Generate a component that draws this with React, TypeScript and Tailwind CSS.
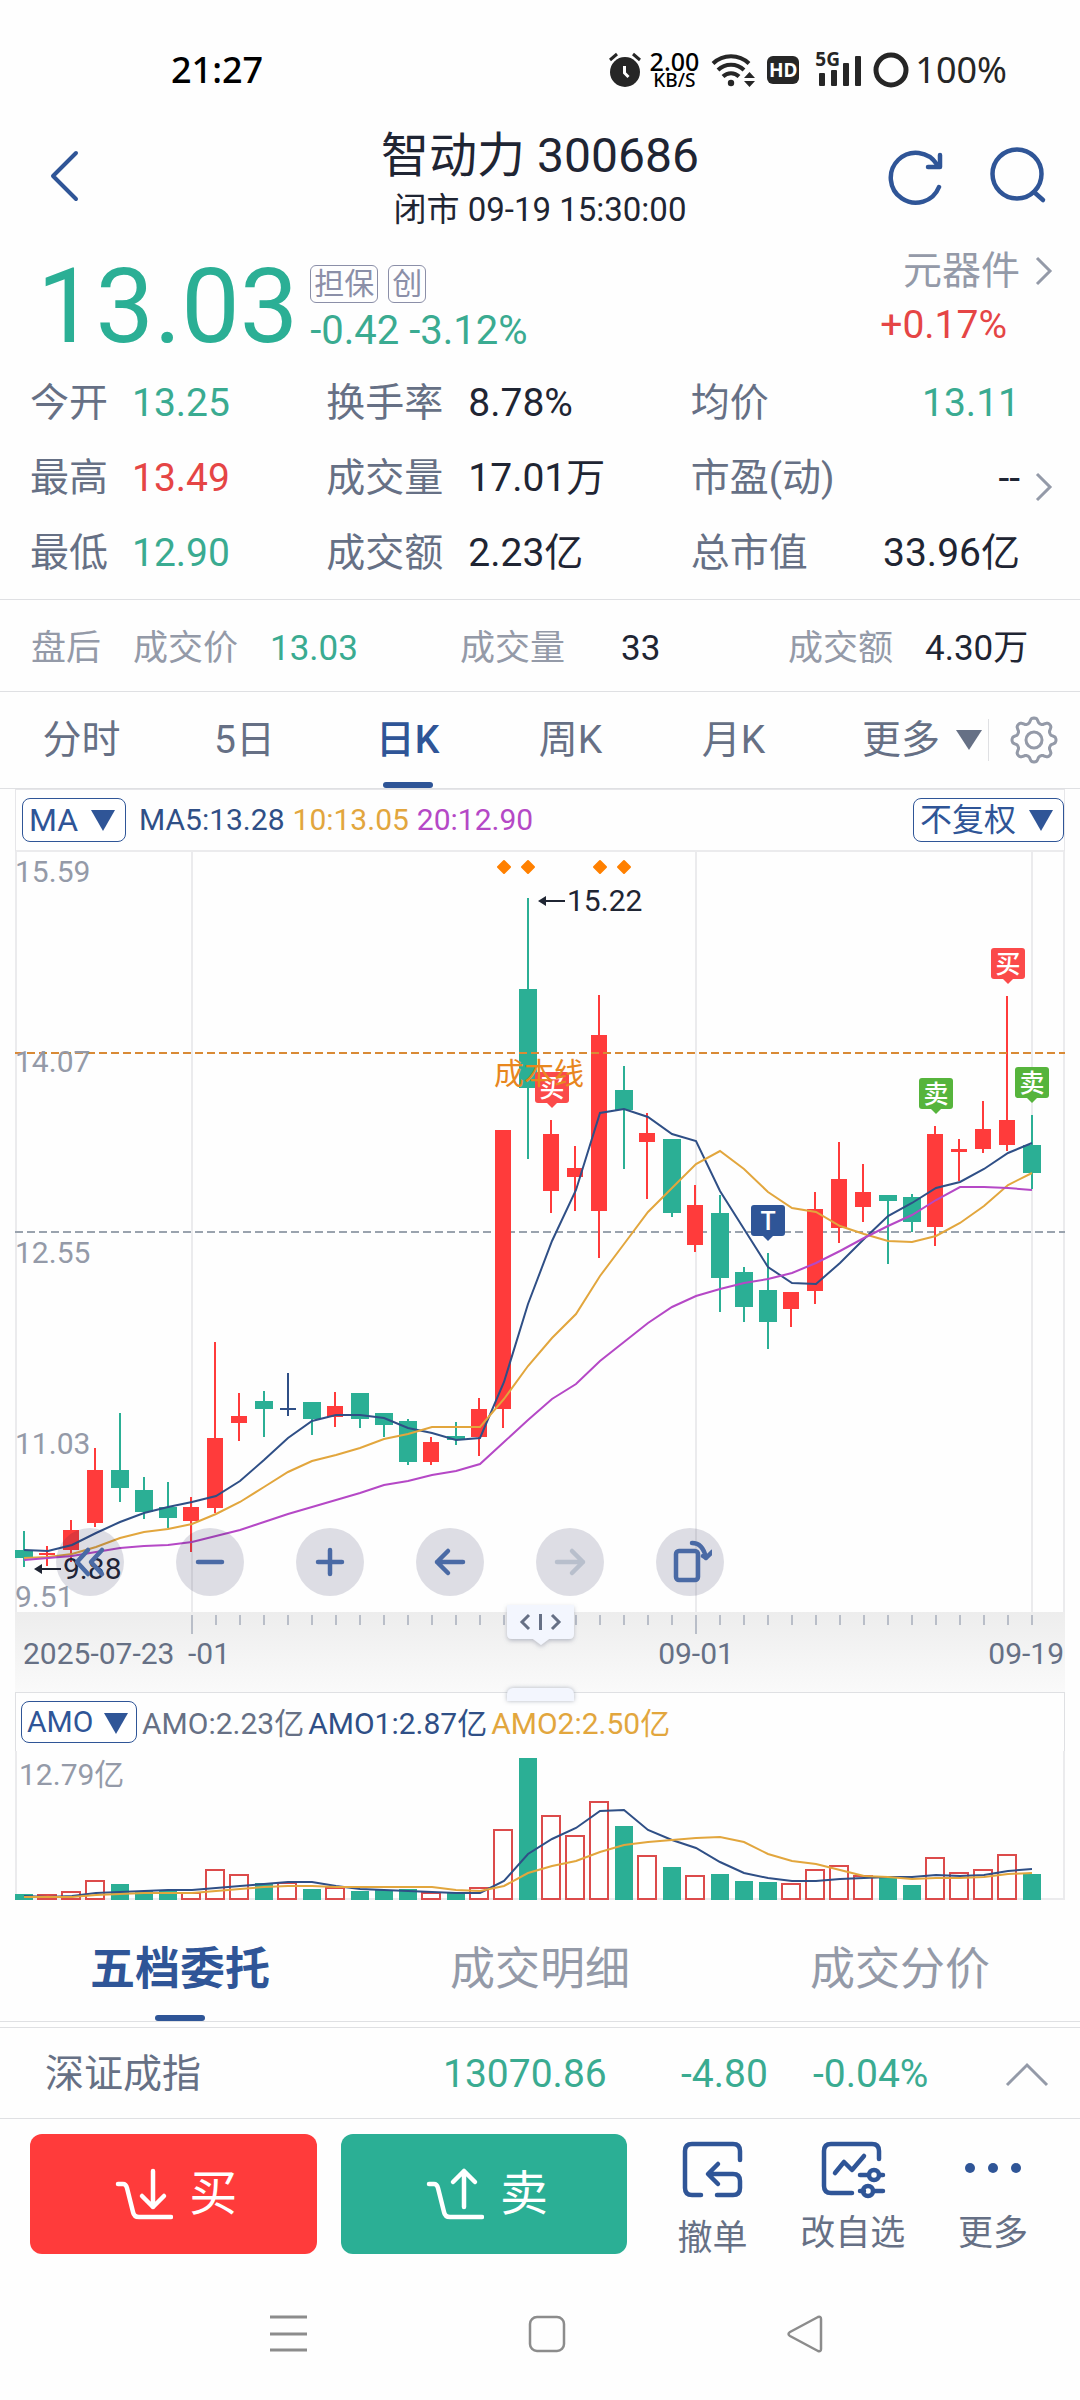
import type { ReactNode } from "react";

type Kind = "up" | "down" | "flat";
// kind, high, body top, body bottom, low
type Candle = [Kind, number, number, number, number];

const RED = "#ff3b3b";
const GREEN = "#2baf95";
const BLUE = "#2f5597";
const NAVY = "#2f4f86";
const GOLD = "#e2a63d";
const PURPLE = "#b548c6";

const candles: Candle[] = [
  ["down", 1531, 1550, 1558, 1567],
  ["up", 1546, 1553, 1555, 1566],
  ["up", 1520, 1530, 1550, 1562],
  ["up", 1448, 1470, 1523, 1527],
  ["down", 1413, 1470, 1488, 1502],
  ["down", 1477, 1490, 1512, 1519],
  ["down", 1482, 1507, 1518, 1528],
  ["up", 1497, 1507, 1521, 1552],
  ["up", 1342, 1438, 1508, 1513],
  ["up", 1393, 1416, 1423, 1441],
  ["down", 1391, 1401, 1409, 1437],
  ["flat", 1373, 1408, 1410, 1416],
  ["down", 1402, 1402, 1419, 1435],
  ["up", 1392, 1406, 1417, 1427],
  ["down", 1393, 1393, 1419, 1428],
  ["down", 1413, 1413, 1425, 1437],
  ["down", 1419, 1421, 1462, 1465],
  ["up", 1437, 1442, 1462, 1465],
  ["down", 1422, 1436, 1440, 1445],
  ["up", 1398, 1409, 1437, 1456],
  ["up", 1130, 1130, 1409, 1428],
  ["down", 898, 989, 1088, 1159],
  ["up", 1120, 1134, 1191, 1213],
  ["up", 1146, 1168, 1177, 1211],
  ["up", 995, 1035, 1211, 1258],
  ["down", 1066, 1090, 1110, 1169],
  ["up", 1113, 1133, 1142, 1199],
  ["down", 1139, 1139, 1213, 1217],
  ["up", 1185, 1205, 1245, 1252],
  ["down", 1195, 1213, 1278, 1312],
  ["down", 1267, 1272, 1307, 1322],
  ["down", 1253, 1290, 1322, 1349],
  ["up", 1292, 1292, 1309, 1327],
  ["up", 1192, 1209, 1291, 1304],
  ["up", 1142, 1179, 1228, 1243],
  ["up", 1164, 1192, 1207, 1222],
  ["down", 1195, 1195, 1201, 1264],
  ["down", 1194, 1197, 1222, 1232],
  ["up", 1126, 1134, 1227, 1246],
  ["up", 1139, 1149, 1152, 1181],
  ["up", 1101, 1129, 1149, 1153],
  ["up", 996, 1120, 1145, 1151],
  ["down", 1115, 1145, 1173, 1189],
];

const ma5 = [
  1550, 1551, 1545, 1533, 1522, 1513, 1507, 1502, 1496, 1481, 1460, 1438, 1421,
  1415, 1415, 1418, 1428, 1433, 1440, 1438, 1382, 1304, 1241, 1190, 1113, 1109,
  1117, 1134, 1141, 1191, 1229, 1267, 1283, 1284, 1263, 1239, 1216, 1203, 1188,
  1182, 1169, 1153, 1143,
];
const ma10 = [
  1558, 1557, 1554, 1547, 1538, 1532, 1529, 1524, 1514, 1502, 1487, 1472, 1461,
  1455, 1448, 1439, 1434, 1427, 1427, 1427, 1399, 1366, 1338, 1314, 1276, 1244,
  1212, 1188, 1164, 1151, 1169, 1192, 1208, 1212, 1226, 1234, 1241, 1242, 1236,
  1223, 1206, 1185, 1173,
];
const ma20 = [
  1560, 1558, 1556, 1552, 1548, 1546, 1545, 1542, 1536, 1530, 1522, 1514, 1507,
  1500, 1493, 1485, 1481, 1475, 1471, 1464, 1442, 1420, 1399, 1384, 1361, 1342,
  1323, 1307, 1296, 1289, 1283, 1279, 1273, 1263, 1251, 1238, 1226, 1215, 1200,
  1187, 1187, 1188, 1190,
];

const amounts = [
  6, 5, 8, 19, 16, 9, 9, 7, 30, 25, 17, 17, 11, 12, 9, 10, 11, 7, 7, 12, 70,
  142, 84, 64, 98, 74, 44, 33, 24, 26, 19, 18, 16, 30, 34, 24, 23, 15, 42, 27,
  30, 45, 26,
];
const amo1 = [
  4, 3, 4, 7, 8, 9, 10, 10, 12, 14, 16, 18, 18, 14, 11, 10, 9, 8, 7, 7, 19, 46,
  61, 72, 89, 90, 70, 60, 52, 38, 27, 22, 19, 19, 21, 22, 23, 23, 25, 24, 25,
  29, 31,
];
const amo2 = [
  3, 3, 3, 5, 6, 7, 7, 7, 9, 11, 13, 14, 14, 13, 13, 13, 13, 13, 10, 9, 14, 27,
  34, 39, 48, 55, 58, 60, 62, 63, 58, 46, 39, 36, 30, 24, 23, 21, 22, 22, 23,
  26, 27,
];

const markers = [
  { i: 22, y: 1072, text: "买", color: "#fb4a4a" },
  { i: 31, y: 1205, text: "T", color: BLUE },
  { i: 38, y: 1078, text: "卖", color: "#56b43c" },
  { i: 41, y: 948, text: "买", color: "#fb4a4a" },
  { i: 42, y: 1067, text: "卖", color: "#56b43c" },
];

const priceLabels = [
  { text: "15.59", y: 882 },
  { text: "14.07", y: 1072 },
  { text: "12.55", y: 1263 },
  { text: "11.03", y: 1454 },
  { text: "9.51", y: 1607 },
];

const stats = [
  { label: "今开", value: "13.25", tone: "text-[#3aab91]" },
  { label: "换手率", value: "8.78%", tone: "text-[#1f2533]" },
  { label: "均价", value: "13.11", tone: "text-[#3aab91]" },
  { label: "最高", value: "13.49", tone: "text-[#e54545]" },
  { label: "成交量", value: "17.01万", tone: "text-[#1f2533]" },
  { label: "市盈(动)", value: "--", tone: "text-[#1f2533]" },
  { label: "最低", value: "12.90", tone: "text-[#3aab91]" },
  { label: "成交额", value: "2.23亿", tone: "text-[#1f2533]" },
  { label: "总市值", value: "33.96亿", tone: "text-[#1f2533]" },
];

const x = (i: number) => 9 + 24 * i;
const line = (ys: number[]) => ys.map((y, i) => `${x(i)},${y}`).join(" ");

// eight soft teeth round a circle
const gearPath =
  Array.from({ length: 96 }, (_, k) => {
    const t = (k / 96) * Math.PI * 2;
    const r = 19.6 + 2.6 * Math.tanh(1.6 * Math.cos(8 * t));
    return `${k ? "L" : "M"}${(25 + r * Math.sin(t)).toFixed(1)} ${(25 - r * Math.cos(t)).toFixed(1)}`;
  }).join("") + "Z";

function StatusBar() {
  return (
    <div className="flex items-center justify-between pt-12 pr-[73px] pb-9 pl-[171px] font-['Noto_Sans',sans-serif] font-medium text-black">
      <span className="text-[36px] leading-[44px]">21:27</span>
      <div className="flex h-11 items-center text-[#262626]">
        <svg width="34" height="36" viewBox="0 0 34 36" fill="none" stroke="currentColor">
          <circle cx="17" cy="20" r="15" fill="currentColor" stroke="none" />
          <path d="M2 8 9 2M32 8 25 2" strokeWidth="3" />
          <path d="M16.500 14v7l4 4" stroke="#fff" strokeWidth="3" />
        </svg>
        <div className="ml-2 flex flex-col items-center text-black">
          <span className="text-[25px] leading-[20px]">2.00</span>
          <span className="text-[19px] leading-[19px]">KB/S</span>
        </div>
        <svg className="ml-3" width="44" height="36" viewBox="0 0 44 36" fill="none" stroke="currentColor" strokeWidth="4">
          <path d="M2 11.500a26 26 0 0 1 36 0" />
          <path d="M7 18a18.500 18.500 0 0 1 26 0" />
          <path d="M12 24.500a11.500 11.500 0 0 1 16 0" />
          <circle cx="20" cy="31" r="3.200" fill="currentColor" stroke="none" />
          <path d="M33 26l5.500-6 5.500 6zM33 29h11l-5.500 6z" fill="currentColor" stroke="none" />
        </svg>
        <span className="ml-3 w-8 rounded-md bg-[#262626] text-center text-[19px] leading-[28px] font-bold text-white">
          HD
        </span>
        <div className="relative ml-4 h-9 w-[48px]">
          <span className="absolute -top-1 left-0 text-[19px] leading-[22px] font-bold">5G</span>
          <svg className="h-9 w-[48px]" viewBox="0 0 48 36" fill="currentColor">
            <rect x="4" y="21" width="6" height="13" rx="1" />
            <rect x="16" y="18" width="6" height="16" rx="1" />
            <rect x="28" y="11" width="6" height="23" rx="1" />
            <rect x="40" y="4" width="6" height="30" rx="1" />
          </svg>
        </div>
        <svg className="ml-[10px]" width="36" height="36" viewBox="0 0 36 36" fill="none" stroke="currentColor">
          <circle cx="18" cy="18" r="15" strokeWidth="5" />
        </svg>
        <span className="ml-[6px] text-[36px] leading-[44px] font-normal">100%</span>
      </div>
    </div>
  );
}

function Header() {
  return (
    <header className="grid grid-cols-[1fr_auto_1fr] items-center">
      <button aria-label="返回" className="justify-self-start pb-2 pl-[48px] text-[#2f5597]">
        <svg width="32" height="54" viewBox="0 0 32 54" fill="none" stroke="currentColor" strokeWidth="4" strokeLinecap="round" strokeLinejoin="round">
          <path d="M28 4 5 27l23 23" />
        </svg>
      </button>
      <div className="flex flex-col items-center gap-1 text-[#1f2533]">
        <h1 className="text-[48px] leading-[56px]">智动力 300686</h1>
        <p className="text-[33px] leading-[44px]">闭市 09-19 15:30:00</p>
      </div>
      <div className="flex gap-[42px] justify-self-end pr-[32px] pb-2 text-[#2f5597]">
        <button aria-label="刷新">
          <svg width="60" height="60" viewBox="0 0 60 60" fill="none" stroke="currentColor" strokeWidth="4.500" strokeLinecap="round" strokeLinejoin="round">
            <path d="M53 41A25 25 0 1 1 51 18.500" />
            <path d="M54 9v12H42" />
          </svg>
        </button>
        <button aria-label="搜索">
          <svg width="60" height="60" viewBox="0 0 60 60" fill="none" stroke="currentColor" strokeWidth="4.500" strokeLinecap="round">
            <circle cx="29" cy="28" r="24.500" />
            <path d="M46 46l9 8" />
          </svg>
        </button>
      </div>
    </header>
  );
}

function Chevron() {
  return (
    <svg width="20" height="32" viewBox="0 0 20 32" fill="none" stroke="#949aa8" strokeWidth="3">
      <path d="M3 3l13 13L3 29" />
    </svg>
  );
}

function Quote() {
  return (
    <section className="flex items-start pt-4 pl-[37px]">
      <strong className="text-[104px] leading-[118px] font-normal text-[#2baf95]">13.03</strong>
      <div className="ml-3 flex flex-col gap-1 pt-[17px]">
        <div className="flex gap-[10px] text-[30px] leading-[36px] text-[#8b8fa8]">
          <span className="rounded-md border border-[#8b8fa8] px-[3px]">担保</span>
          <span className="rounded-md border border-[#8b8fa8] px-[3px]">创</span>
        </div>
        <div className="text-[40px] leading-[48px] text-[#3aab91]">-0.42 -3.12%</div>
      </div>
      <div className="ml-auto flex flex-col items-end gap-2 text-[39px] leading-[46px]">
        <a href="#sector" className="flex items-center gap-[14px] pr-[26px] text-[#949aa8]">
          元器件
          <Chevron />
        </a>
        <span className="pr-[73px] text-[#e54545]">+0.17%</span>
      </div>
    </section>
  );
}

function Stats() {
  return (
    <section className="flex items-center border-b border-[#dfe0e3] pb-2 text-[39px] leading-[75px]">
      <dl className="grid flex-1 grid-cols-[296fr_364fr_329fr] pl-[30px]">
        {stats.map((s, i) => (
          <div key={s.label} className={i % 3 === 2 ? "flex justify-between" : "flex"}>
            <dt
              className={
                i % 3 === 0
                  ? "w-[102px] text-[#667085]"
                  : i % 3 === 1
                    ? "w-[142px] text-[#667085]"
                    : "text-[#667085]"
              }
            >
              {s.label}
            </dt>
            <dd className={s.tone}>{s.value}</dd>
          </div>
        ))}
      </dl>
      <a href="#detail" aria-label="更多指标" className="w-[60px] pt-4 pl-[14px]">
        <Chevron />
      </a>
    </section>
  );
}

function AfterHours() {
  return (
    <section className="grid grid-cols-[429fr_328fr_292fr] border-b border-[#dfe0e3] pt-[6px] pl-[31px] text-[35px] leading-[85px] text-[#949aa8]">
      <div className="flex gap-8">
        <span>盘后</span>
        <span>成交价</span>
        <span className="text-[#3aab91]">13.03</span>
      </div>
      <div className="flex gap-14">
        <span>成交量</span>
        <span className="text-[#1f2533]">33</span>
      </div>
      <div className="flex gap-8">
        <span>成交额</span>
        <span className="text-[#1f2533]">4.30万</span>
      </div>
    </section>
  );
}

function PeriodTabs() {
  const tabs = ["分时", "5日", "日K", "周K", "月K"];
  return (
    <nav className="flex items-center border-b border-[#dfe0e3] text-[39px] text-[#667085]">
      <div className="grid w-[815px] shrink grid-cols-5">
        {tabs.map((tab) => {
          const active = tab === "日K";
          return (
            <button
              key={tab}
              className={
                active
                  ? "flex flex-col items-center pt-[6px] font-medium text-[#2f5597]"
                  : "flex flex-col items-center pt-[6px]"
              }
            >
              <span className="leading-[84px]">{tab}</span>
              <span className={active ? "h-[6px] w-[50px] rounded-sm bg-[#2f5597]" : "h-[6px] w-[50px]"} />
            </button>
          );
        })}
      </div>
      <button className="ml-auto flex shrink-0 items-center gap-4 leading-[84px]">
        更多
        <svg width="26" height="22" viewBox="0 0 26 22" fill="currentColor">
          <path d="M0 1h26L13 21z" />
        </svg>
      </button>
      <span className="mr-5 ml-[6px] h-[42px] w-px bg-[#dfe0e3]" />
      <button aria-label="设置" className="pr-[21px]">
        <svg width="50" height="50" viewBox="0 0 50 50" fill="none" stroke="#949aa8" strokeWidth="3" strokeLinejoin="round">
          <path d={gearPath} />
          <circle cx="25" cy="25" r="8" />
        </svg>
      </button>
    </nav>
  );
}

function Picker({ label, value, small }: { label: string; value: string; small?: boolean }) {
  return (
    <div className="relative text-[#2f5597]">
      <select
        aria-label={label}
        className={
          small
            ? "block appearance-none rounded-lg border border-[#2f5597] bg-white pr-[42px] pl-[5px] text-[30px] leading-[40px]"
            : "block appearance-none rounded-lg border border-[#2f5597] bg-white pr-[46px] pl-[6px] text-[32px] leading-[42px]"
        }
      >
        <option>{value}</option>
      </select>
      <svg
        className={small ? "pointer-events-none absolute top-3 right-[9px]" : "pointer-events-none absolute top-3 right-[11px]"}
        width="24"
        height="21"
        viewBox="0 0 24 21"
        fill="currentColor"
      >
        <path d="M0 0h24L12 21z" />
      </svg>
    </div>
  );
}

function KChart() {
  return (
    <svg
      className="block h-auto w-full font-['Roboto','Noto_Sans_CJK_SC',sans-serif]"
      viewBox="0 852 1050 840"
      fontSize="30"
    >
      <defs>
        <linearGradient id="axis" x1="0" y1="0" x2="0" y2="1">
          <stop offset="0" stopColor="#ededed" />
          <stop offset="1" stopColor="#fafafa" />
        </linearGradient>
        <filter id="lift" x="-20%" y="-20%" width="140%" height="160%">
          <feDropShadow dx="0" dy="2" stdDeviation="2" floodColor="#667085" floodOpacity="0.4" />
        </filter>
      </defs>
      <path d="M1 852v760M177 852v760M681 852v760M1017 852v760M1049 852v760" stroke="#ebebed" strokeWidth="2" />
      <path d="M0 1232h1050" stroke="#9aa3ae" strokeWidth="2" strokeDasharray="8 4" />

      {candles.map(([kind, high, top, bottom, low], i) => {
        const color = kind === "up" ? RED : kind === "down" ? GREEN : NAVY;
        const cx = kind === "up" ? x(i) - 1 : x(i);
        const w = kind === "down" ? 18 : 16;
        return (
          <g key={i} fill={color}>
            <rect x={cx - 1} y={high} width="2" height={low - high} />
            <rect x={cx - w / 2} y={top} width={w} height={bottom - top} />
          </g>
        );
      })}

      <g fill="none" strokeWidth="2">
        <polyline points={line(ma5)} stroke={NAVY} />
        <polyline points={line(ma10)} stroke={GOLD} />
        <polyline points={line(ma20)} stroke={PURPLE} />
      </g>
      <path d="M0 1053h1050" stroke="#d98a35" strokeWidth="2" strokeDasharray="8 4" />

      {[20, 21, 24, 25].map((i) => (
        <path
          key={i}
          d={`M${x(i)} 861l6 6-6 6-6-6z`}
          fill="#ff8000"
          stroke="#ff8000"
          strokeWidth="2"
          strokeLinejoin="round"
        />
      ))}

      {markers.map((m) => (
        <g key={m.i}>
          <rect x={x(m.i) - 17} y={m.y} width="34" height="31" rx="3" fill={m.color} />
          <path d={`M${x(m.i) - 6} ${m.y + 30}h12l-6 6z`} fill={m.color} />
          <text x={x(m.i)} y={m.y + 25} fontSize="25" fontWeight="500" textAnchor="middle" fill="#fff">
            {m.text}
          </text>
        </g>
      ))}

      <text x="479" y="1084" fill="#e8871e">成本线</text>
      <g fill="#949aa8">
        {priceLabels.map((p) => (
          <text key={p.text} x="0" y={p.y}>
            {p.text}
          </text>
        ))}
      </g>
      <g fill="#1f2533">
        <path d="M523 901l8-5v4h19v2h-19v4z" />
        <text x="552" y="911">15.22</text>
        <path d="M19 1569l8-5v4h19v2H27v4z" />
        <text x="48" y="1579">9.88</text>
      </g>

      <rect x="0" y="1612" width="1050" height="80" fill="url(#axis)" />
      <g stroke="#b9bec8" strokeWidth="2">
        {candles.map((_, i) =>
          i < 7 ? null : (
            <path key={i} d={`M${x(i)} 1615v${i === 7 || i === 28 ? 19 : 10}`} />
          ),
        )}
      </g>
      <g fill="#667085">
        <text x="8" y="1664">2025-07-23</text>
        <text x="173" y="1664">-01</text>
        <text x="681" y="1664" textAnchor="middle">09-01</text>
        <text x="1049" y="1664" textAnchor="end">09-19</text>
      </g>
      <path
        d="M492 1605h67v29q0 5-5 5h-20l-8 6-8-6h-21q-5 0-5-5z"
        fill="#f3f6fe"
        filter="url(#lift)"
      />
      <path d="M514 1615l-7 7 7 7M525.500 1614v16M537 1615l7 7-7 7" fill="none" stroke="#667085" strokeWidth="3" />
    </svg>
  );
}

function RoundButton({ label, disabled, children }: { label: string; disabled?: boolean; children: ReactNode }) {
  return (
    <button
      aria-label={label}
      disabled={disabled}
      className="flex h-[68px] w-[68px] items-center justify-center rounded-full bg-[#232352]/15 text-[#4a6aa5] disabled:text-[#b8bfcc]"
    >
      <svg width="44" height="44" viewBox="0 0 44 44" fill="none" stroke="currentColor" strokeWidth="4.500" strokeLinecap="round" strokeLinejoin="round">
        {children}
      </svg>
    </button>
  );
}

function ChartControls() {
  return (
    <div className="absolute bottom-[96px] left-[41px] flex gap-[52px]">
      <RoundButton label="最早">
        <path d="M20 10 9 22l11 12M34 10 23 22l11 12" />
      </RoundButton>
      <RoundButton label="缩小">
        <path d="M10 22h24" />
      </RoundButton>
      <RoundButton label="放大">
        <path d="M10 22h24M22 10v24" />
      </RoundButton>
      <RoundButton label="左移">
        <path d="M35 22H9M20 11 9 22l11 11" />
      </RoundButton>
      <RoundButton label="右移" disabled>
        <path d="M9 22h26M24 11l11 11-11 11" />
      </RoundButton>
      <RoundButton label="横屏">
        <rect x="8" y="11" width="22" height="29" rx="3" />
        <path d="M24 3c8 0 12 5 14 15M38 18l6-6M38 18l-3-2" />
      </RoundButton>
    </div>
  );
}

function AmountChart() {
  return (
    <svg
      className="block h-auto w-full font-['Roboto','Noto_Sans_CJK_SC',sans-serif]"
      viewBox="0 0 1050 150"
      fontSize="30"
    >
      <path d="M1 0v148H1049V0" fill="none" stroke="#ebebed" strokeWidth="2" />
      <text x="4" y="34" fill="#949aa8">12.79亿</text>
      {amounts.map((h, i) =>
        candles[i][0] === "down" ? (
          <rect key={i} x={x(i) - 9} y={149 - h} width="18" height={h} fill={GREEN} />
        ) : (
          <rect key={i} x={x(i) - 10} y={149 - h} width="18" height={h - 1} fill="#fff" stroke="#dc4b4b" strokeWidth="2" />
        ),
      )}
      <g fill="none" strokeWidth="2">
        <polyline points={line(amo1.map((h) => 149 - h))} stroke={NAVY} />
        <polyline points={line(amo2.map((h) => 149 - h))} stroke={GOLD} />
      </g>
    </svg>
  );
}

function Charts() {
  return (
    <section className="px-[15px]">
      <div className="flex items-center border-x border-t border-b-2 border-[#e6e6e9] border-b-[#ebebed] py-2 pl-[6px] text-[30px] leading-[44px]">
        <Picker label="主图指标" value="MA" />
        <div className="ml-[13px] flex gap-2">
          <span className="text-[#2f4f86]">MA5:13.28</span>
          <span className="text-[#e2a63d]">10:13.05</span>
          <span className="text-[#b548c6]">20:12.90</span>
        </div>
        <div className="ml-auto">
          <Picker label="复权方式" value="不复权" />
        </div>
      </div>
      <div className="relative">
        <KChart />
        <ChartControls />
      </div>
      <div className="relative flex items-center border-x border-t border-[#dfe0e3] py-[6px] pl-[5px] text-[30px] leading-[42px]">
        <span className="absolute -top-[5px] left-[491px] h-[13px] w-[67px] rounded-t-md bg-[#f3f6fe] shadow-[0_0_4px_rgba(102,112,133,0.5)]" />
        <Picker label="副图指标" value="AMO" small />
        <div className="ml-[5px] flex gap-1 pt-1">
          <span className="text-[#667085]">AMO:2.23亿</span>
          <span className="text-[#2f4f86]">AMO1:2.87亿</span>
          <span className="text-[#e2a63d]">AMO2:2.50亿</span>
        </div>
      </div>
      <AmountChart />
    </section>
  );
}

function DetailTabs() {
  return (
    <nav className="grid grid-cols-3 border-b border-[#dfe0e3] pt-[39px] text-[45px] leading-[60px] text-[#949aa8]">
      <button className="flex flex-col items-center gap-[15px] font-bold text-[#2f5597]">
        五档委托
        <span className="h-[6px] w-[50px] rounded-sm bg-[#2f5597]" />
      </button>
      <button className="self-start">成交明细</button>
      <button className="self-start">成交分价</button>
    </nav>
  );
}

function IndexRow() {
  return (
    <section className="mt-[5px] flex items-center border-y border-[#dfe0e3] pt-[3px] pr-[30px] pl-[45px] text-[39px] leading-[87px] text-[#3aab91]">
      <span className="w-[398px] text-[#667085]">深证成指</span>
      <span className="w-[238px]">13070.86</span>
      <span className="w-[132px]">-4.80</span>
      <span>-0.04%</span>
      <button aria-label="展开" className="ml-auto">
        <svg width="46" height="26" viewBox="0 0 46 26" fill="none" stroke="#949aa8" strokeWidth="3">
          <path d="M3 23 23 3l20 20" />
        </svg>
      </button>
    </section>
  );
}

function ActionBar() {
  return (
    <section className="flex items-start pt-[15px] pr-[17px] pl-[30px]">
      <button className="flex h-[120px] flex-[287] items-center justify-center gap-4 rounded-xl bg-[#ff3b3b] text-[48px] leading-none text-white">
        <svg className="ml-[6px]" width="58" height="54" viewBox="0 0 58 54" fill="none" stroke="currentColor" strokeWidth="4.500" strokeLinecap="round" strokeLinejoin="round">
          <path d="M3 17h5q3 0 4 4l6 24q1 5 6 5h32" />
          <path d="M38 4v36M27 29l11 11 11-11" />
        </svg>
        买
      </button>
      <button className="ml-6 flex h-[120px] flex-[287] items-center justify-center gap-4 rounded-xl bg-[#2baf95] text-[48px] leading-none text-white">
        <svg className="ml-[6px]" width="58" height="54" viewBox="0 0 58 54" fill="none" stroke="currentColor" strokeWidth="4.500" strokeLinecap="round" strokeLinejoin="round">
          <path d="M3 17h5q3 0 4 4l6 24q1 5 6 5h32" />
          <path d="M38 40V4M27 15 38 4l11 11" />
        </svg>
        卖
      </button>
      <div className="ml-[15px] grid flex-[421] grid-cols-3 text-[35px] leading-[44px] text-[#667085]">
        <button className="flex flex-col items-center gap-[18px] self-start pt-[5px]">
          <svg width="62" height="60" viewBox="0 0 62 60" fill="none" stroke="#2f5597" strokeWidth="4.500" strokeLinecap="round" strokeLinejoin="round">
            <path d="M58 21v-9q0-7-7-7H10q-7 0-7 7v37q0 7 7 7h9" />
            <path d="M35 56h16q7 0 7-7V42q0-7-7-7H27M36 25 26 35l10 10" />
          </svg>
          撤单
        </button>
        <button className="flex flex-col items-center gap-[13px] self-start pt-[5px]">
          <svg width="66" height="60" viewBox="0 0 66 60" fill="none" stroke="#2f5597" strokeWidth="4.500" strokeLinecap="round" strokeLinejoin="round">
            <path d="M59 20v-8q0-7-7-7H11q-7 0-7 7v35q0 7 7 7h21" />
            <path d="M15 34l9-11 8 8 12-14" />
            <path d="M40 36h8M60 36h3M40 52h4M54 52h9" />
            <circle cx="54" cy="36" r="5" />
            <circle cx="48" cy="52" r="5" />
          </svg>
          改自选
        </button>
        <button className="flex flex-col items-center gap-[13px] self-start pt-[5px]">
          <svg width="60" height="60" viewBox="0 0 60 60" fill="#2f5597">
            <circle cx="7" cy="29" r="5" />
            <circle cx="30" cy="29" r="5" />
            <circle cx="53" cy="29" r="5" />
          </svg>
          更多
        </button>
      </div>
    </section>
  );
}

function SystemNav() {
  return (
    <nav className="flex justify-center gap-[219px] pt-[53px] pb-[46px] pl-[14px] text-[#8c8c8c]">
      <button aria-label="最近任务">
        <svg width="40" height="40" viewBox="0 0 40 40" fill="none" stroke="currentColor" strokeWidth="3">
          <path d="M2 3h37M2 20h37M2 36h37" />
        </svg>
      </button>
      <button aria-label="主页">
        <svg width="40" height="40" viewBox="0 0 40 40" fill="none" stroke="currentColor" strokeWidth="2.500">
          <rect x="3" y="3" width="34" height="34" rx="7" />
        </svg>
      </button>
      <button aria-label="后退">
        <svg width="40" height="40" viewBox="0 0 40 40" fill="none" stroke="currentColor" strokeWidth="2.500" strokeLinejoin="round">
          <path d="M32 3Q35 2 35 5V35Q35 38 32 37L4 22Q1 20 4 18Z" />
        </svg>
      </button>
    </nav>
  );
}

export default function App() {
  return (
    <main className="bg-[#fefefe] font-['Roboto','Noto_Sans_CJK_SC',sans-serif]">
      <StatusBar />
      <Header />
      <Quote />
      <Stats />
      <AfterHours />
      <PeriodTabs />
      <Charts />
      <DetailTabs />
      <IndexRow />
      <ActionBar />
      <SystemNav />
    </main>
  );
}
